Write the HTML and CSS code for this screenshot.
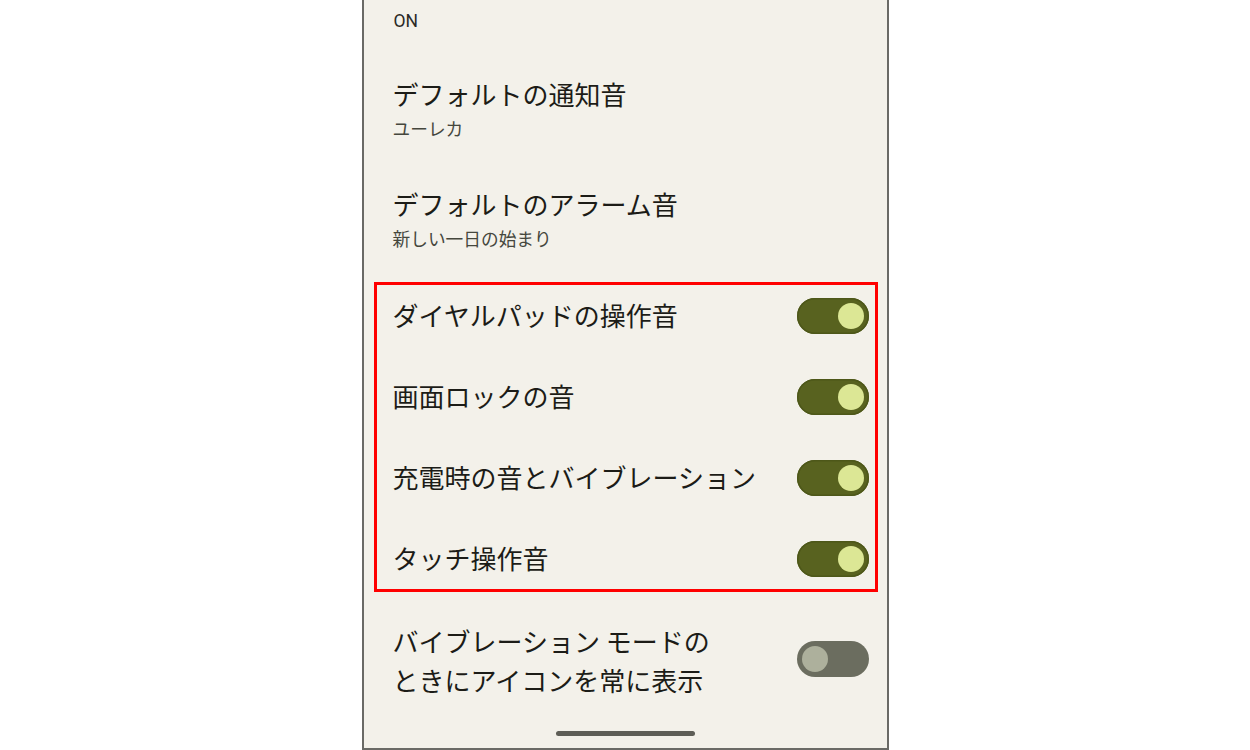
FILE: index.html
```html
<!DOCTYPE html>
<html lang="ja">
<head>
<meta charset="utf-8">
<title>音とバイブレーション</title>
<link rel="stylesheet" href="styles.css">
</head>
<body>
<div class="phone">
  <div class="status-line">ON</div>

  <div class="item">
    <div class="title">デフォルトの通知音</div>
    <div class="sub">ユーレカ</div>
  </div>

  <div class="item">
    <div class="title">デフォルトのアラーム音</div>
    <div class="sub">新しい一日の始まり</div>
  </div>

  <div class="highlight">
    <div class="row">
      <div class="title">ダイヤルパッドの操作音</div>
      <span class="switch on"></span>
    </div>
    <div class="row">
      <div class="title">画面ロックの音</div>
      <span class="switch on"></span>
    </div>
    <div class="row">
      <div class="title">充電時の音とバイブレーション</div>
      <span class="switch on"></span>
    </div>
    <div class="row">
      <div class="title">タッチ操作音</div>
      <span class="switch on"></span>
    </div>
  </div>

  <div class="row last">
    <div class="title two-line">バイブレーション モードの<br>ときにアイコンを常に表示</div>
    <span class="switch off"></span>
  </div>

  <div class="home-bar"></div>
</div>
</body>
</html>
```

FILE: styles.css
```css
* { box-sizing: border-box; }

html, body {
  margin: 0;
  padding: 0;
  background: #ffffff;
}

body {
  font-family: "Noto Sans CJK JP", "Noto Sans", sans-serif;
  color: #1c1c17;
}

.phone {
  width: 527px;
  height: 750px;
  margin: 0 auto;
  background: #f3f1ea;
  border-left: 2px solid #6a6a66;
  border-right: 2px solid #6a6a66;
  border-bottom: 2px solid #6a6a66;
  display: flex;
  flex-direction: column;
}

.status-line {
  font-family: Roboto, "Noto Sans", sans-serif;
  font-size: 17.5px;
  line-height: 24px;
  color: #2a2a25;
  padding: 9px 0 22px 30px;
}

.item {
  padding: 22px 18px 25px 29px;
}

.title {
  font-size: 26px;
  line-height: 34px;
  color: #1c1c17;
  white-space: nowrap;
}

.item .sub {
  margin-top: 5px;
  font-size: 17.7px;
  line-height: 24px;
  color: #45473d;
}

.highlight {
  margin: 7px 9px 0 10px;
  border: 3px solid #ff0000;
  display: flex;
  flex-direction: column;
  gap: 20px;
}

.row {
  display: flex;
  align-items: center;
  justify-content: space-between;
  height: 61px;
  padding: 0 6px 0 16px;
}

.row .title {
  margin-top: -2px;
}

.row.last {
  height: 78px;
  margin-top: 29px;
  padding: 0 18px 0 29px;
}

.row.last .title {
  margin-top: -1px;
}

.two-line {
  line-height: 39px;
}

.switch {
  position: relative;
  flex: none;
  width: 72px;
  height: 36px;
  border-radius: 18px;
}

.switch::after {
  content: "";
  position: absolute;
  top: 5px;
  width: 26px;
  height: 26px;
  border-radius: 50%;
}

.switch.on {
  background: #58621f;
  box-shadow: inset 0 0 0 1.5px #4d5719;
}

.switch.on::after {
  right: 5px;
  background: #dce795;
}

.switch.off {
  background: #6b6d5f;
  margin-top: -3px;
}

.switch.off::after {
  left: 5px;
  background: #adb09c;
}

.home-bar {
  margin: auto auto 12px;
  width: 139px;
  height: 5px;
  border-radius: 3px;
  background: #5e5e57;
}
```
